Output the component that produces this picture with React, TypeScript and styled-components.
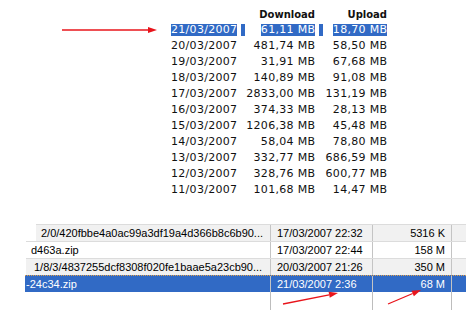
import React from "react";
import styled, { createGlobalStyle, css } from "styled-components";

const GlobalStyle = createGlobalStyle`
  html, body {
    margin: 0;
    padding: 0;
    background: #ffffff;
  }
  body {
    width: 466px;
    height: 327px;
    overflow: hidden;
  }
`;

const SELECT_BLUE = "#316ac5";

const Page = styled.div`
  position: relative;
  width: 466px;
  height: 327px;
  display: flex;
  flex-direction: column;
`;

// ---- upper table (daily traffic) ----

const TrafficGrid = styled.div`
  display: grid;
  grid-template-columns: 66px 78px 72px;
  grid-auto-rows: 16px;
  margin-left: 171px;
  padding-top: 6px;
  font-family: "DejaVu Sans", Verdana, sans-serif;
  font-size: 11px;
  color: #111;
`;

const HeadCell = styled.div`
  display: flex;
  align-items: center;
  justify-content: flex-end;
  font-size: 10px;
  font-weight: bold;
`;

const Cell = styled.div<{ $align: "left" | "right" }>`
  display: flex;
  align-items: center;
  justify-content: ${(p) => (p.$align === "left" ? "flex-start" : "flex-end")};
  white-space: nowrap;
  letter-spacing: 0.3px;
`;

const Blip = styled.span`
  width: 4px;
  height: 12px;
  margin-left: 4px;
  margin-right: auto;
  background: ${SELECT_BLUE};
`;

const Value = styled.span<{ $selected?: boolean }>`
  display: inline-block;
  line-height: 12px;
  height: 12px;
  margin-right: -0.3px;
  ${(p) =>
    p.$selected &&
    css`
      background: ${SELECT_BLUE};
      color: #ffffff;
    `}
`;

const traffic = [
  ["21/03/2007", "61,11 MB", "18,70 MB"],
  ["20/03/2007", "481,74 MB", "58,50 MB"],
  ["19/03/2007", "31,91 MB", "67,68 MB"],
  ["18/03/2007", "140,89 MB", "91,08 MB"],
  ["17/03/2007", "2833,00 MB", "131,19 MB"],
  ["16/03/2007", "374,33 MB", "28,13 MB"],
  ["15/03/2007", "1206,38 MB", "45,48 MB"],
  ["14/03/2007", "58,04 MB", "78,80 MB"],
  ["13/03/2007", "332,77 MB", "686,59 MB"],
  ["12/03/2007", "328,76 MB", "600,77 MB"],
  ["11/03/2007", "101,68 MB", "14,47 MB"],
];

// ---- lower table (file list) ----

const FileList = styled.div`
  margin-top: 26px;
  display: flex;
  flex-direction: column;
  font-family: "Liberation Sans", Arial, sans-serif;
  font-size: 11px;
  color: #000;
`;

const FileRow = styled.div<{ $cut: number; $shade?: boolean; $selected?: boolean }>`
  display: grid;
  grid-template-columns: 1fr 102px 79px 14px;
  height: 16px;
  margin-left: ${(p) => p.$cut}px;
  border-top: 1px solid #dcdcdc;
  background: ${(p) => (p.$shade ? "#f1f1f1" : "#ffffff")};
  ${(p) =>
    p.$selected &&
    css`
      background: ${SELECT_BLUE};
      color: #ffffff;
      border-top: 1px dotted #e3a24a;
    `}
`;

const FileCell = styled.div<{ $align?: "left" | "right"; $indent?: number }>`
  display: flex;
  align-items: center;
  justify-content: ${(p) => (p.$align === "right" ? "flex-end" : "flex-start")};
  padding: 0 6px 0 ${(p) => p.$indent ?? 6}px;
  border-right: 1px solid #c4c4c4;
  white-space: nowrap;
  overflow: hidden;
  &:last-child {
    border-right: none;
  }
`;

const Tail = styled.div`
  display: grid;
  grid-template-columns: 1fr 102px 79px 14px;
  height: 18px;
  margin-left: 26px;
`;

const TailCell = styled.div<{ $line?: boolean }>`
  border-right: ${(p) => (p.$line ? "1px solid #bdbdbd" : "none")};
`;

const Overlay = styled.svg`
  position: absolute;
  left: 0;
  top: 0;
  pointer-events: none;
`;

const files = [
  { name: "2/0/420fbbe4a0ac99a3df19a4d366b8c6b90...", date: "17/03/2007 22:32", size: "5316 K", cut: 36, indent: 5, shade: true },
  { name: "d463a.zip", date: "17/03/2007 22:44", size: "158 M", cut: 26, indent: 5 },
  { name: "1/8/3/4837255dcf8308f020fe1baae5a23cb90...", date: "20/03/2007 21:26", size: "350 M", cut: 26, indent: 8, shade: true },
  { name: "-24c34.zip", date: "21/03/2007 2:36", size: "68 M", cut: 25, indent: 1, selected: true },
];

function Arrow({ x1, y1, x2, y2 }: { x1: number; y1: number; x2: number; y2: number }) {
  const ang = Math.atan2(y2 - y1, x2 - x1);
  const len = 9;
  const w = 3;
  const bx = x2 - len * Math.cos(ang);
  const by = y2 - len * Math.sin(ang);
  const px = -Math.sin(ang) * w;
  const py = Math.cos(ang) * w;
  return (
    <g>
      <line x1={x1} y1={y1} x2={bx} y2={by} stroke="#e8141b" strokeWidth={1.3} />
      <polygon
        points={`${x2},${y2} ${bx + px},${by + py} ${bx - px},${by - py}`}
        fill="#e8141b"
      />
    </g>
  );
}

export default function App() {
  return (
    <>
      <GlobalStyle />
      <Page>
        <TrafficGrid>
          <div />
          <HeadCell>Download</HeadCell>
          <HeadCell>Upload</HeadCell>
          {traffic.map(([date, down, up], i) => {
            const sel = i === 0;
            return (
              <React.Fragment key={date}>
                <Cell $align="left">
                  <Value $selected={sel}>{date}</Value>
                </Cell>
                <Cell $align="right">
                  {sel && <Blip />}
                  <Value $selected={sel}>{down}</Value>
                </Cell>
                <Cell $align="right">
                  {sel && <Blip />}
                  <Value $selected={sel}>{up}</Value>
                </Cell>
              </React.Fragment>
            );
          })}
        </TrafficGrid>

        <FileList>
          {files.map((f) => (
            <FileRow key={f.date} $cut={f.cut} $shade={f.shade} $selected={f.selected}>
              <FileCell $indent={f.indent}>{f.name}</FileCell>
              <FileCell>{f.date}</FileCell>
              <FileCell $align="right">{f.size}</FileCell>
              <FileCell />
            </FileRow>
          ))}
          <Tail>
            <TailCell $line />
            <TailCell $line />
            <TailCell $line />
            <TailCell />
          </Tail>
        </FileList>

        <Overlay width={466} height={327} viewBox="0 0 466 327">
          <Arrow x1={62} y1={30} x2={157} y2={30} />
          <Arrow x1={283} y1={304} x2={338} y2={293} />
          <Arrow x1={388} y1={304} x2={421} y2={290} />
        </Overlay>
      </Page>
    </>
  );
}
